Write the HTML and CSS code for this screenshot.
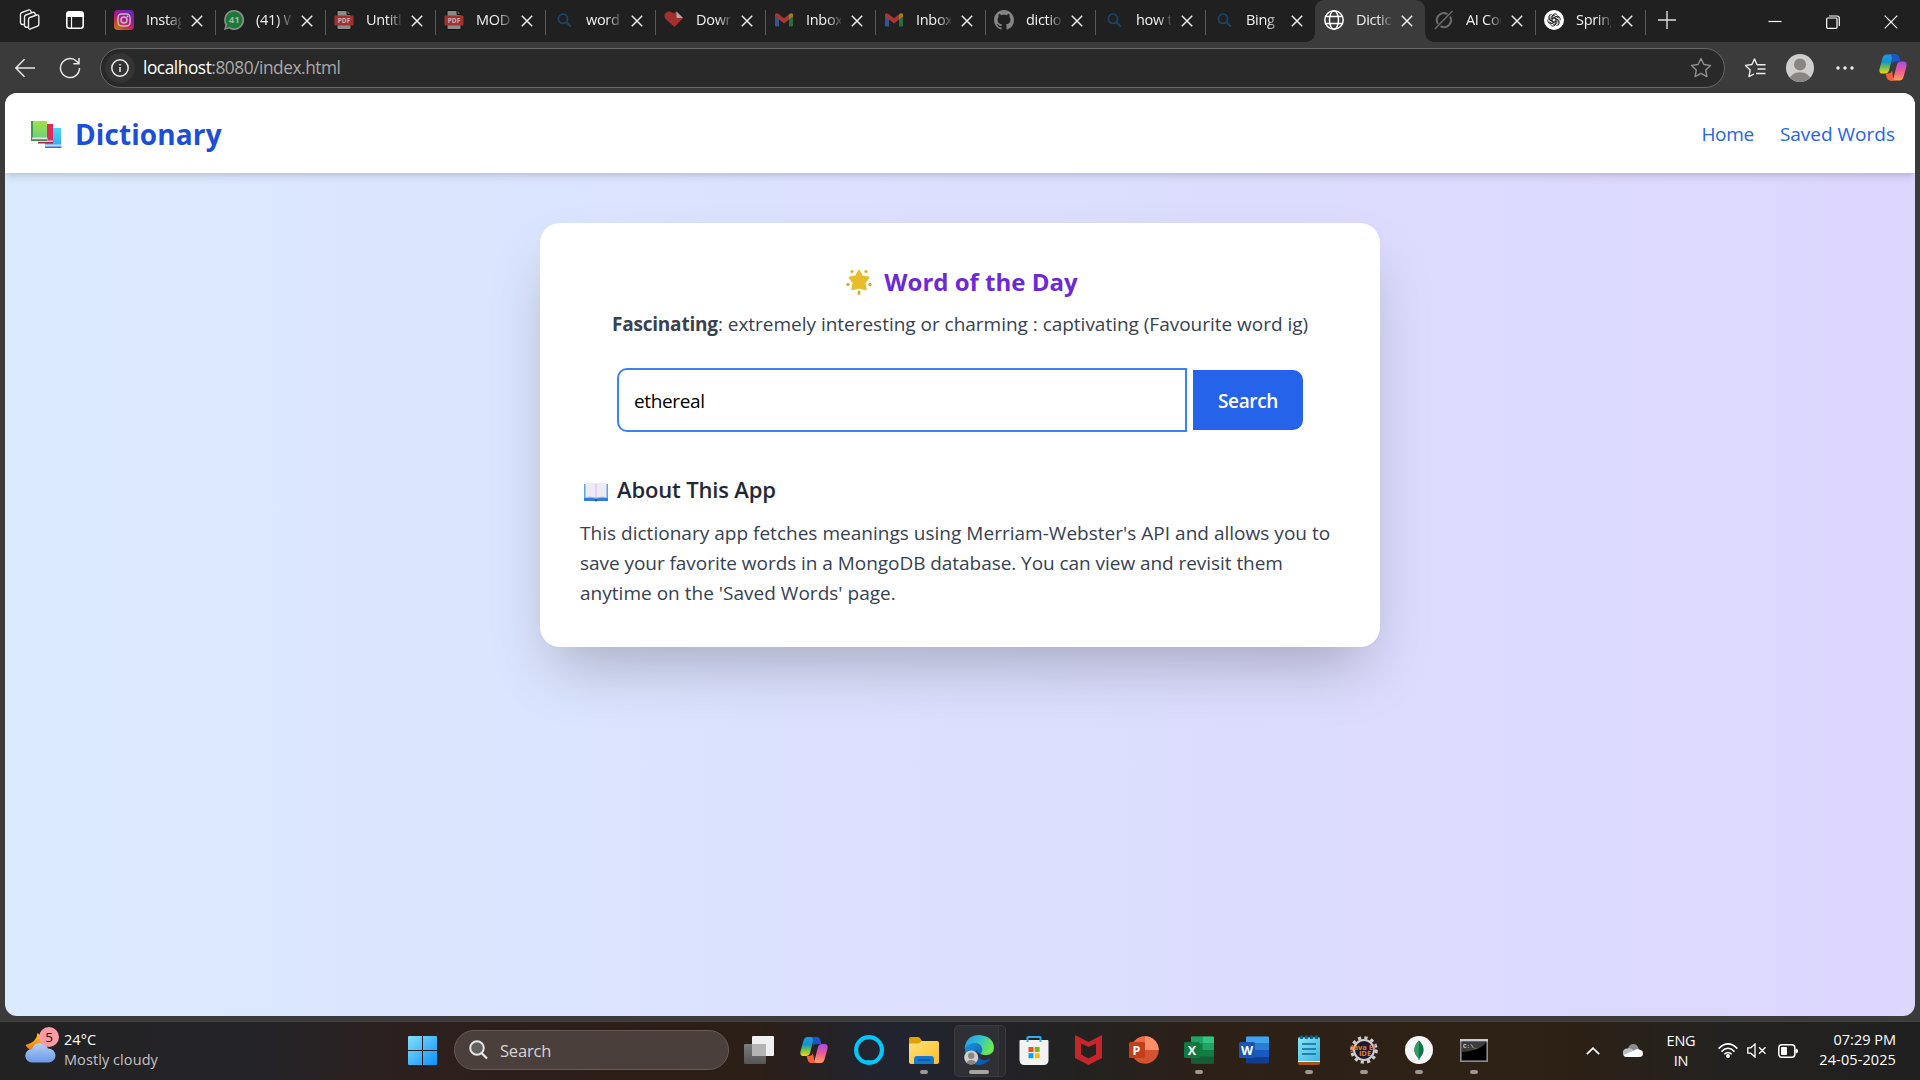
FILE: index.html
```html
<!DOCTYPE html>
<html lang="en">
<head>
<meta charset="utf-8">
<title>Dictionary</title>
<link rel="stylesheet" href="styles.css">
</head>
<body>
<svg class="defs" width="0" height="0" aria-hidden="true">
  <defs>
    <linearGradient id="gInsta" x1="0" y1="1" x2=".6" y2="0"><stop offset="0" stop-color="#c98a10"/><stop offset=".3" stop-color="#c4442a"/><stop offset=".6" stop-color="#b0188a"/><stop offset="1" stop-color="#6a28b0"/></linearGradient>
    <linearGradient id="gCpA" x1="0" y1="0" x2="0" y2="1"><stop offset="0" stop-color="#1b9be8"/><stop offset=".4" stop-color="#1496c8"/><stop offset=".7" stop-color="#7cc04a"/><stop offset="1" stop-color="#f4d512"/></linearGradient>
    <linearGradient id="gCpB" x1="0" y1="0" x2="0" y2="1"><stop offset="0" stop-color="#a64ee8"/><stop offset=".5" stop-color="#ee5a92"/><stop offset="1" stop-color="#ffa052"/></linearGradient>
    <linearGradient id="gWin" x1="0" y1="0" x2="29" y2="29" gradientUnits="userSpaceOnUse"><stop offset="0" stop-color="#84e0fc"/><stop offset="1" stop-color="#0a92fa"/></linearGradient>
    <linearGradient id="gFold" x1="0" y1="0" x2="1" y2="1"><stop offset="0" stop-color="#ffe07a"/><stop offset="1" stop-color="#fcbf28"/></linearGradient>
    <linearGradient id="gEdgeA" x1="0" y1="0" x2="1" y2=".4"><stop offset="0" stop-color="#2494e4"/><stop offset=".5" stop-color="#2fc0d4"/><stop offset="1" stop-color="#6be84e"/></linearGradient>
    <linearGradient id="gEdgeB" x1="0" y1="0" x2="1" y2="1"><stop offset="0" stop-color="#1a94e4"/><stop offset="1" stop-color="#0b4a9c"/></linearGradient>
    <linearGradient id="gCloud" x1="0" y1="0" x2="0" y2="1"><stop offset="0" stop-color="#b6d0f8"/><stop offset="1" stop-color="#6b98e6"/></linearGradient>
    <linearGradient id="gMoon" x1="0" y1="0" x2="0" y2="1"><stop offset="0" stop-color="#f8c830"/><stop offset="1" stop-color="#f07a10"/></linearGradient>
    <linearGradient id="gGreen" x1="0" y1="0" x2="0" y2="1"><stop offset="0" stop-color="#a2e048"/><stop offset="1" stop-color="#6fd07a"/></linearGradient>
    <linearGradient id="gBlue" x1="0" y1="0" x2="0" y2="1"><stop offset="0" stop-color="#4fd6f4"/><stop offset="1" stop-color="#2fa8f0"/></linearGradient>
    <linearGradient id="gNote" x1="0" y1="0" x2="1" y2="1"><stop offset="0" stop-color="#8ae4f8"/><stop offset="1" stop-color="#3fb4e0"/></linearGradient>
    <linearGradient id="gGlass" x1="0" y1="0" x2="0" y2="1"><stop offset="0" stop-color="#7c7c7c"/><stop offset="1" stop-color="#555"/></linearGradient>
    <symbol id="x" viewBox="0 0 12 12"><path d="M.8.8l10.400 10.400M11.200.8L.8 11.200" stroke="#eee" stroke-width="1.500" fill="none"/></symbol>
    <symbol id="pdf" viewBox="0 0 20 20"><path d="M3 .5h10l4 4V19.500H3z" fill="#8b8b8b" stroke="#111"/><path d="M13 .5v4h4" fill="#555" stroke="#111"/><rect x=".5" y="5.500" width="19" height="10" rx="1" fill="#a13131"/><text x="10" y="13.300" text-anchor="middle" class="pdf-text">PDF</text></symbol>
    <symbol id="bing" viewBox="0 0 20 20"><circle cx="9" cy="8.800" r="4.600" fill="none" stroke="#1b4468" stroke-width="1.800"/><path d="M12.500 12.300l4.300 4.300" stroke="#1b4468" stroke-width="2"/></symbol>
    <symbol id="gmail" viewBox="0 0 20 20"><path d="M1 4.500h4V16.500H2.200A1.200 1.200 0 0 1 1 15.300z" fill="#345595"/><path d="M15 4.500h4V15.300a1.200 1.200 0 0 1-1.200 1.200H15z" fill="#2c6b3c"/><path d="M1 4.800C1 3 3 2.800 4.200 3.800L10 8.200l5.800-4.400V9L10 13.500 1 6.500z" fill="#a5382e"/><path d="M15 4.500C17 2.300 19 3.200 19 4.800V6.500L15 9.600z" fill="#a67c10"/></symbol>
    <symbol id="copilot" viewBox="0 0 28 26"><path d="M7.500 0H17l-3.500 2.500L10 16q-1 3-4 3H3.500Q-.5 19 .6 14L3.500 3.500Q4.500 0 7.500 0z" fill="url(#gCpA)"/><path d="M11 0h6q2.500 0 3.300 3l1.100 4H16q-2 0-2.600 2L13 4q-.4-4-2-4z" fill="#1d55d0"/><path d="M20.500 26H11l3.500-2.500L18 10q1-3 4-3h2.500Q28.500 7 27.400 12L24.500 22.500Q23.500 26 20.500 26z" fill="url(#gCpB)"/><path d="M17 26h-6q-2.500 0-3.300-3l-1.100-4H9q3 0 4-3l1 6q.4 4 3 4z" fill="#f4603a"/></symbol>
  </defs>
</svg>

<header class="tabs">
  <div class="tab-tools">
    <svg width="22" height="22" viewBox="0 0 22 22" fill="none" stroke="#eee" stroke-width="1.400" stroke-linejoin="round"><path d="M9.500 10.500q0-1.500 1.300-2l7-2.500q2-.6 2 1.200v8q0 1.500-1.300 2l-7 2.700q-2 .6-2-1.200zM9.500 18q-4 .8-4-1.500V8q0-1.500 1.300-2L14 3.300q2-.5 2.300 2.500M5.500 15.300Q1.500 16 1.500 13.700V5.500q0-1.500 1.300-2L10 .9q1.800-.5 2.200 2.800"/></svg>
    <svg width="18" height="18" viewBox="0 0 18 18"><rect x=".8" y=".8" width="16.400" height="16.400" rx="2.500" fill="none" stroke="#fff" stroke-width="1.600"/><path d="M1 1h16v5H1z" fill="#fff"/><path d="M5.500 6v11" stroke="#fff" stroke-width="1.200"/></svg>
  </div>
  <div class="tab"><svg class="fav" viewBox="0 0 20 20"><rect width="20" height="20" rx="4" fill="url(#gInsta)"/><rect x="4" y="4" width="12" height="12" rx="3.500" fill="none" stroke="#cdb6c8" stroke-width="1.500"/><circle cx="10" cy="10" r="3" fill="none" stroke="#cdb6c8" stroke-width="1.500"/><circle cx="13.500" cy="6.400" r=".9" fill="#cdb6c8"/></svg><span class="name">Instagram</span><svg class="close"><use href="#x"/></svg></div>
  <div class="tab"><svg class="fav" viewBox="0 0 20 20"><path d="M10 0a10 10 0 1 1-5 18.600L0 20l1.400-5A10 10 0 0 1 10 0z" fill="#8c908c"/><path d="M10 1.600a8.400 8.400 0 1 1-4.500 15.500L2.200 18l1-3.200A8.400 8.400 0 0 1 10 1.600z" fill="#1b7a3a"/><text x="10.200" y="13.400" text-anchor="middle" class="wa-text">41</text></svg><span class="name">(41) WhatsApp</span><svg class="close"><use href="#x"/></svg></div>
  <div class="tab"><svg class="fav"><use href="#pdf"/></svg><span class="name">Untitled</span><svg class="close"><use href="#x"/></svg></div>
  <div class="tab"><svg class="fav"><use href="#pdf"/></svg><span class="name">MODULE</span><svg class="close"><use href="#x"/></svg></div>
  <div class="tab"><svg class="fav"><use href="#bing"/></svg><span class="name">word</span><svg class="close"><use href="#x"/></svg></div>
  <div class="tab"><svg class="fav" viewBox="0 0 20 20"><path d="M10.500 17L1.500 9Q-.8 5.500 1.500 3 4.500.5 8 2.200L10 3.500 12 1.200 19 8z" fill="#a33030"/><path d="M12.500 1.500L19 8h-5.500q-1 0-1-1z" fill="#b4a8a8"/></svg><span class="name">Download</span><svg class="close"><use href="#x"/></svg></div>
  <div class="tab"><svg class="fav"><use href="#gmail"/></svg><span class="name">Inbox</span><svg class="close"><use href="#x"/></svg></div>
  <div class="tab"><svg class="fav"><use href="#gmail"/></svg><span class="name">Inbox</span><svg class="close"><use href="#x"/></svg></div>
  <div class="tab"><svg class="fav" viewBox="0 0 16 16"><path fill="#858585" d="M8 0C3.580 0 0 3.580 0 8c0 3.540 2.290 6.530 5.470 7.590.4.070.55-.17.55-.38 0-.19-.01-.82-.01-1.490-2.010.37-2.530-.49-2.690-.94-.09-.23-.48-.94-.82-1.130-.28-.15-.68-.52-.01-.53.63-.01 1.080.58 1.230.82.720 1.210 1.870.87 2.330.66.070-.52.280-.87.510-1.070-1.780-.2-3.640-.89-3.640-3.950 0-.87.310-1.590.820-2.150-.08-.2-.36-1.020.08-2.120 0 0 .67-.21 2.200.82.640-.18 1.320-.27 2-.27s1.360.09 2 .27c1.530-1.040 2.200-.82 2.200-.82.440 1.100.160 1.920.080 2.120.510.560.820 1.270.820 2.150 0 3.070-1.870 3.750-3.650 3.950.290.250.540.730.540 1.480 0 1.070-.01 1.930-.01 2.200 0 .21.150.46.550.38A8.010 8.010 0 0 0 16 8c0-4.420-3.580-8-8-8z"/></svg><span class="name">dictionary</span><svg class="close"><use href="#x"/></svg></div>
  <div class="tab"><svg class="fav"><use href="#bing"/></svg><span class="name">how to</span><svg class="close"><use href="#x"/></svg></div>
  <div class="tab"><svg class="fav"><use href="#bing"/></svg><span class="name">Bing</span><svg class="close"><use href="#x"/></svg></div>
  <div class="tab active"><svg class="fav" viewBox="0 0 20 20" fill="none" stroke="#fff" stroke-width="1.500"><circle cx="10" cy="10" r="9.200"/><ellipse cx="10" cy="10" rx="4.500" ry="9.200"/><path d="M1.500 6.500h17M1.500 13.500h17"/></svg><span class="name">Dictionary</span><svg class="close"><use href="#x"/></svg></div>
  <div class="tab plain"><svg class="fav" viewBox="0 0 20 20" fill="none" stroke="#6c6c6c" stroke-width="2"><path d="M13.500 4.200A7 7 0 0 0 4 14M6.500 16.200A7 7 0 0 0 16 6.500"/><path d="M.8 19L18.500 1" stroke-width="1.400"/></svg><span class="name">AI Code</span><svg class="close"><use href="#x"/></svg></div>
  <div class="tab"><svg class="fav" viewBox="0 0 20 20"><circle cx="10" cy="10" r="10" fill="#fff"/><g fill="none" stroke="#222" stroke-width=".9"><path id="pet" d="M8 11V6.500a3 3 0 0 1 5.500-1.300M8 8.800l4-2.300 3 1.700"/><use href="#pet" transform="rotate(60 10 10)"/><use href="#pet" transform="rotate(120 10 10)"/><use href="#pet" transform="rotate(180 10 10)"/><use href="#pet" transform="rotate(240 10 10)"/><use href="#pet" transform="rotate(300 10 10)"/></g></svg><span class="name">Spring</span><svg class="close"><use href="#x"/></svg></div>
  <div class="new-tab"><svg width="18" height="18" viewBox="0 0 18 18"><path d="M9 0v18M0 9h18" stroke="#ddd" stroke-width="1.400"/></svg></div>
  <div class="win-btns">
    <svg width="14" height="14" viewBox="0 0 14 14"><path d="M.5 6.500h13" stroke="#fff" stroke-width="1.200"/></svg>
    <svg width="14" height="14" viewBox="0 0 14 14" fill="none" stroke="#fff" stroke-width="1.200"><rect x=".7" y="3" width="10.300" height="10.300" rx="1"/><path d="M3 1h8q2.300 0 2.300 2.300V11"/></svg>
    <svg width="14" height="14" viewBox="0 0 14 14"><path d="M.7.7l12.600 12.600M13.300.7L.7 13.300" stroke="#fff" stroke-width="1.200"/></svg>
  </div>
</header>

<div class="toolbar">
  <svg class="back" width="20" height="20" viewBox="0 0 20 20" fill="none" stroke="#e6e6e6" stroke-width="1.500"><path d="M20 10H1M9.500 1.300L.9 10l8.600 8.700"/></svg>
  <svg class="reload" width="22" height="22" viewBox="0 0 22 22" fill="none" stroke="#e6e6e6" stroke-width="1.500"><path d="M20.500 11a9.500 9.500 0 1 1-2.900-6.800L20 6.500M20 1v5.700h-5.700"/></svg>
  <div class="address">
    <span class="info"><svg width="18" height="18" viewBox="0 0 18 18" fill="none" stroke="#eee" stroke-width="1.500"><circle cx="9" cy="9" r="8.200"/><path d="M9 8v5M9 5v1.600"/></svg></span>
    <span class="url">localhost<span class="dim">:8080/index.html</span></span>
    <svg class="star" width="22" height="22" viewBox="0 0 22 22"><path d="M11 1.500l2.900 6 6.600.9-4.800 4.600 1.200 6.600-5.900-3.200-5.900 3.200 1.200-6.600L1.500 8.400l6.600-.9z" fill="none" stroke="#8f8f8f" stroke-width="1.400" stroke-linejoin="round"/></svg>
  </div>
  <svg class="favs" width="22" height="22" viewBox="0 0 22 22" fill="none" stroke="#eee" stroke-width="1.400" stroke-linejoin="round"><path d="M13 7.700L10.500 2 7.900 7.500l-6.400.9 4.700 4.600L5 19.600l5-2.600M13 7.700h8.500M13.500 12h8M12 16.500h9.500"/></svg>
  <svg class="avatar" width="28" height="28" viewBox="0 0 28 28"><clipPath id="av"><circle cx="14" cy="14" r="14"/></clipPath><g clip-path="url(#av)"><path d="M0 0h28v28H0z" fill="#d0ceca"/><circle cx="14" cy="10.500" r="6" fill="#8a8683"/><ellipse cx="14" cy="26" rx="10.500" ry="7.800" fill="#8a8683"/></g></svg>
  <svg class="more" width="18" height="4" viewBox="0 0 18 4" fill="#eee"><circle cx="2" cy="2" r="1.700"/><circle cx="9" cy="2" r="1.700"/><circle cx="16" cy="2" r="1.700"/></svg>
  <svg class="cp" width="28" height="27"><use href="#copilot"/></svg>
</div>

<div class="frame">
  <div class="page">
    <nav class="navbar">
      <svg class="books" width="31" height="28" viewBox="0 0 31 28"><path d="M14 8h16v19H14z" fill="url(#gBlue)"/><path d="M14 24.500h16.500V27H14z" fill="#d0d4f4"/><path d="M14 26.500h16.500V28H14z" fill="#2878c8"/><path d="M7 4h15v17H7z" fill="#e0285c"/><path d="M7 20.500h15v2H7z" fill="#e8d0e0"/><path d="M7 22h15v1.400H7z" fill="#a82050"/><path d="M1 1h15v17H1z" fill="url(#gGreen)"/><path d="M0 1h2v19H0z" fill="#3a9c50"/><path d="M1 17.500h15.500V20H1z" fill="#e0e4ec"/><path d="M0 19.300h16V21H0z" fill="#4c8448"/></svg>
      <span class="brand">Dictionary</span>
      <a class="link home">Home</a>
      <a class="link">Saved Words</a>
    </nav>
    <main class="card">
      <h2 class="wotd">
        <svg width="26" height="26" viewBox="0 0 26 26"><path d="M13 2l3 5.800 6.200.8-4 5.200 1.300 6.200-6.500-1.700-6.500 1.700 1.300-6.200L3.800 8.600l6.200-.8z" fill="#e8bd2c" stroke="#e8bd2c" stroke-width="2.400" stroke-linejoin="round"/><g fill="#e0aa28"><circle cx="6" cy="2.500" r="1.600"/><circle cx="20" cy="2.500" r="1.600"/><circle cx="2" cy="15.500" r="1.700"/><circle cx="24" cy="15.500" r="1.700"/><ellipse cx="13" cy="23.700" rx="1.500" ry="2.200"/></g></svg>
        <span>Word of the Day</span>
      </h2>
      <p class="meaning"><b>Fascinating</b>: extremely interesting or charming : captivating (Favourite word ig)</p>
      <form class="search">
        <div class="field">ethereal</div>
        <div class="button">Search</div>
      </form>
      <h3 class="about">
        <svg width="24" height="20" viewBox="0 0 24 20"><path d="M0 2h24v17H0z" fill="#5aa8e8"/><path d="M0 16h24v3H0z" fill="#2d7ed8"/><path d="M1.500 1q6-1 10.500.5V16q-5-1.500-10.500-.5zM22.500 1q-6-1-10.500.5V16q5-1.500 10.500-.5z" fill="#efeaf6"/><path d="M12 1.500V16" stroke="#cdc4e0"/><path d="M1.500 15.500q5.500-1 10.500.7 5-1.700 10.500-.7" stroke="#b8b0dc" fill="none"/><circle cx="12" cy="18.300" r="1.200" fill="#1550a0"/></svg>
        <span>About This App</span>
      </h3>
      <p class="desc">This dictionary app fetches meanings using Merriam-Webster's API and allows you to<br><span class="tight">save your favorite words in a MongoDB database. You can view and revisit them</span><br>anytime on the 'Saved Words' page.</p>
    </main>
  </div>
</div>

<footer class="taskbar">
  <div class="weather">
    <div class="w-icon">
      <svg width="32" height="38" viewBox="0 0 32 38"><path d="M12.500 6q-.5 9-12 12 2.500 5 8 5 9-1 8-11-.5-4-4-6z" fill="url(#gMoon)"/><path d="M7 35.500a6.500 6.500 0 0 1 0-13.500q2-6 8-6t8 5.500a7 7 0 0 1 1 14z" fill="url(#gCloud)"/></svg>
      <span class="badge">5</span>
    </div>
    <div class="w-text"><span class="temp">24°C</span><span>Mostly cloudy</span></div>
  </div>
  <div class="apps">
    <div class="start"><svg width="29" height="29" viewBox="0 0 29 29" fill="url(#gWin)"><path d="M0 1q0-1 1-1h13v14H0zM15 0h13q1 0 1 1v13H15zM0 15h14v14H1q-1 0-1-1zM15 15h14v13q0 1-1 1H15z"/></svg></div>
    <div class="tb-search"><svg width="19" height="20" viewBox="0 0 19 20"><circle cx="8" cy="8" r="6.800" fill="#63605f" stroke="#e6e4e4" stroke-width="2"/><path d="M12.800 13.200l5.200 5.300" stroke="#e6e4e4" stroke-width="2.300"/></svg><span>Search</span></div>
    <div class="app"><svg width="30" height="28" viewBox="0 0 30 28"><rect x="8" width="22" height="20" rx="1" fill="#f0f0f0"/><rect y="8" width="22" height="20" rx="1" fill="url(#gGlass)"/><path d="M8 8h14v12H8z" fill="#b4b4b4"/></svg></div>
    <div class="app"><svg width="28" height="26"><use href="#copilot"/></svg></div>
    <div class="app"><svg width="30" height="30" viewBox="0 0 30 30"><path fill-rule="evenodd" d="M15 0a15 15 0 1 1-1.500 30L12.600 26.200A11.500 11.500 0 1 1 17 26.300L13.500 30H15A15 15 0 1 1 15 0z" fill="none"/><circle cx="15" cy="15" r="12.900" fill="none" stroke="#00c8fa" stroke-width="4.200"/><path d="M12.500 25v2.500L14 30l5-4.500z" fill="#00c8fa"/></svg></div>
    <div class="app run"><svg width="30" height="27" viewBox="0 0 30 27"><path d="M0 2q0-2 2-2h7q1 0 2 1l2 3v5H0z" fill="#e0a008"/><path d="M0 6.500h10l2.500-2.500H28q2 0 2 2v19q0 2-2 2H2q-2 0-2-2z" fill="url(#gFold)"/><path d="M5 27v-5q0-3 3-3h14q3 0 3 3v5z" fill="#1478d0"/><path d="M9 23h12" stroke="#0a4a90" stroke-width="1.200"/></svg></div>
    <div class="app current"><svg width="30" height="30" viewBox="0 0 30 30"><path d="M1 13Q3 5 12 8q9 3 6 12-5-2-6-5-2 6 4 9 5 3 11-1-4 7-12 7Q1 29 1 13z" fill="url(#gEdgeB)"/><path d="M.5 14Q2 0 15 0q14 1 15 12 0 8-8 8-5 0-5-2 2-2 1-5-2-5-8-5-7 1-9.500 6z" fill="url(#gEdgeA)"/><clipPath id="ep"><circle cx="7.200" cy="22.500" r="7"/></clipPath><g clip-path="url(#ep)"><path d="M0 15h15v15H0z" fill="#d0ceca"/><circle cx="7.200" cy="20.800" r="3.200" fill="#8a8683"/><ellipse cx="7.200" cy="28.800" rx="5" ry="3.900" fill="#8a8683"/></g></svg></div>
    <div class="app"><svg width="30" height="30" viewBox="0 0 30 30"><path d="M8.500 6V2.500Q8.500 2 9 2h12q.5 0 .5.500V6" fill="none" stroke="#28b0ec" stroke-width="2"/><path d="M.5 6Q.5 5 1.500 5h27q1 0 1 1v19q0 5-5 5h-19q-5 0-5-5z" fill="#f3f3f3"/><path d="M9.500 12h5v5h-5z" fill="#f25022"/><path d="M15.700 12h5v5h-5z" fill="#7fba00"/><path d="M9.500 18.200h5v5h-5z" fill="#00a4ef"/><path d="M15.700 18.200h5v5h-5z" fill="#ffb900"/><path d="M8.500 5v2M21.500 5v2" stroke="#28b0ec" stroke-width="2"/></svg></div>
    <div class="app"><svg width="27" height="30" viewBox="0 0 27 30"><path fill-rule="evenodd" d="M0 0l13.500 7L27 0v23l-13.500 7L0 23zM6 8.500v11l7.500 4 7.500-4v-11L13.500 12z" fill="#c4262c"/></svg></div>
    <div class="app"><svg width="30" height="28" viewBox="0 0 30 28"><circle cx="16" cy="14" r="13.700" fill="#d35230"/><path d="M16 .3A13.700 13.700 0 0 0 2.300 14H16z" fill="#ed6c47"/><path d="M16 .3A13.700 13.700 0 0 1 29.700 14H16z" fill="#ff8f6b"/><rect y="6" width="16" height="16" rx="1.500" fill="#c43e1c"/><text x="7.500" y="18.500" text-anchor="middle" class="ms">P</text></svg></div>
    <div class="app run"><svg width="30" height="28" viewBox="0 0 30 28"><rect x="7" y=".5" width="23" height="27" rx="1.500" fill="#107c41"/><path d="M7 .500h11.500v7H7z" fill="#21a366"/><path d="M18.500.5H29q1 0 1 1v6H18.500z" fill="#33c481"/><path d="M18.500 7.500H30v6.500H18.500z" fill="#21a366"/><path d="M7 20.500h23v6q0 1-1 1H8q-1 0-1-1z" fill="#185c37"/><rect y="6" width="16" height="16" rx="1.500" fill="#0f7a40"/><text x="8" y="18.500" text-anchor="middle" class="ms">X</text></svg></div>
    <div class="app"><svg width="30" height="28" viewBox="0 0 30 28"><rect x="7" y=".5" width="23" height="27" rx="1.500" fill="#103f91"/><path d="M7 7h23v14H7z" fill="#185abd"/><path d="M7 7h23v7H7z" fill="#2b7cd3"/><path d="M8 .500h21q1 0 1 1V7H7V1.500q0-1 1-1z" fill="#41a5ee"/><rect y="6" width="16" height="16" rx="1.500" fill="#1a55b4"/><text x="8" y="18.500" text-anchor="middle" class="ms">W</text></svg></div>
    <div class="app run"><svg width="22" height="30" viewBox="0 0 22 30"><path d="M0 4q0-2 2-2h18q2 0 2 2v24q0 2-2 2H2q-2 0-2-2z" fill="#a8560c"/><path d="M0 22h22v5H0z" fill="#f0f0ec"/><path d="M0 4q0-2 2-2h18q2 0 2 2v22H0z" fill="url(#gNote)"/><path d="M4 9h14M4 14h14M4 19h14" stroke="#0c6c94" stroke-width="1.600"/><g fill="#0c6084"><circle cx="3.500" cy="2.200" r="1.900"/><circle cx="8.500" cy="2.200" r="1.900"/><circle cx="13.500" cy="2.200" r="1.900"/><circle cx="18.500" cy="2.200" r="1.900"/></g></svg></div>
    <div class="app run"><svg width="30" height="28" viewBox="0 0 30 28"><circle cx="15" cy="14" r="12.300" fill="none" stroke="#cfcfcf" stroke-width="3" stroke-dasharray="3.220 3.220"/><circle cx="15" cy="14" r="10" fill="#1e1a2e" stroke="#cfcfcf" stroke-width="2"/><text x="15" y="13.500" text-anchor="middle" class="java">Java EE</text><text x="16" y="20" text-anchor="middle" class="java">IDE</text></svg></div>
    <div class="app run"><svg width="28" height="28" viewBox="0 0 28 28"><circle cx="14" cy="14" r="14" fill="#f6f6f6"/><path d="M14 4.500q9 9 .5 18V24h-1v-1.500Q5 13.500 14 4.500z" fill="#10744a"/><path d="M14 4.500q-9 9-.3 18z" fill="#2fa065"/></svg></div>
    <div class="app run"><svg width="28" height="23" viewBox="0 0 28 23"><rect x=".8" y=".8" width="26.400" height="21.400" fill="#000" stroke="#8a8d96" stroke-width="1.600"/><path d="M2 3h24q-4 8-24 10z" fill="#3c3c3c"/><path d="M0 0h28v2.500H0z" fill="#c8cad0"/><text x="3" y="9" class="cmd">C:\_</text></svg></div>
  </div>
  <div class="tray">
    <svg class="chev" width="14" height="8" viewBox="0 0 14 8"><path d="M.8 7.200L7 1.200l6.200 6" fill="none" stroke="#fff" stroke-width="1.800"/></svg>
    <svg class="drive" width="20" height="13" viewBox="0 0 20 13"><path d="M5 9V5Q6 0 10.500 0 14 0 15.500 4l1 4z" fill="#8c8c8c"/><path d="M4 13a4 4 0 0 1 0-8.500q3-1 5.500 1L14 9z" fill="#bdbdbd"/><path d="M3 13q-2.500-.5-2.500-2L12 6q2-1.500 4-.5 4 .5 4 4 0 3.500-4 3.500z" fill="#fff"/></svg>
    <div class="lang"><span>ENG</span><span>IN</span></div>
    <svg class="wifi" width="20" height="15" viewBox="0 0 20 15" fill="none" stroke="#fff" stroke-width="1.500"><path d="M.6 5.600q9.400-9.400 18.800 0M3.500 8.600q6.500-6.500 13 0M6.300 11.300q3.700-3.700 7.400 0"/><circle cx="10" cy="13" r="1.200" fill="#fff"/></svg>
    <svg class="vol" width="20" height="15" viewBox="0 0 20 15" fill="none" stroke="#fff" stroke-width="1.300"><path d="M.8 4.800h3L8 1v13l-4.200-3.800h-3zM12 4.300l6.500 6.500M18.500 4.300L12 10.800"/></svg>
    <svg class="bat" width="20" height="14" viewBox="0 0 20 14"><rect x=".8" y=".8" width="16" height="12.400" rx="3" fill="none" stroke="#fff" stroke-width="1.500"/><rect x="3" y="3" width="6" height="8" rx="1" fill="#fff"/><path d="M17.500 4.500q2.500 0 2.500 2.500t-2.500 2.500z" fill="#fff"/></svg>
    <div class="clock"><span class="time">07:29 PM</span><span class="date">24-05-2025</span></div>
  </div>
</footer>
</body>
</html>
```
FILE: styles.css
```css
* { box-sizing: border-box; }
body {
  margin: 0;
  width: 1920px;
  height: 1080px;
  overflow: hidden;
  display: flex;
  flex-direction: column;
  background: #3b3b3b;
  font-family: "Open Sans", "Noto Sans", sans-serif;
}
svg { display: block; flex: none; }
.defs { position: absolute; }
h2, h3, p { margin: 0; }

/* tab strip */
.tabs {
  height: 42px;
  flex: none;
  display: flex;
  background: #202020;
  color: #f2f2f2;
}
.tab-tools {
  width: 105px;
  padding: 0 21px 2px 19px;
  display: flex;
  align-items: center;
  justify-content: space-between;
}
.tab {
  width: 110px;
  height: 42px;
  padding: 0 0 2px 9px;
  display: flex;
  align-items: center;
  background: linear-gradient(#5a5a5a, #5a5a5a) 0 10px / 1px 25px no-repeat;
}
.tab.active {
  position: relative;
  background: #3b3b3b;
  border-radius: 9px 9px 0 0;
}
.tab.active::before,
.tab.active::after {
  content: "";
  position: absolute;
  bottom: 0;
  width: 9px;
  height: 9px;
}
.tab.active::before { left: -9px; background: radial-gradient(circle at 0 0, transparent 8.5px, #3b3b3b 9px); }
.tab.active::after { right: -9px; background: radial-gradient(circle at 100% 0, transparent 8.5px, #3b3b3b 9px); }
.tab.plain { background: none; }
.fav { width: 20px; height: 20px; }
.name {
  width: 35px;
  margin-left: 12px;
  overflow: hidden;
  white-space: nowrap;
  font-size: 14.5px;
  line-height: 24px;
  letter-spacing: -.3px;
  -webkit-mask-image: linear-gradient(90deg, #000 60%, rgba(0, 0, 0, .15));
  mask-image: linear-gradient(90deg, #000 60%, rgba(0, 0, 0, .15));
}
.close { width: 12px; height: 12px; margin: 1px 0 0 10px; }
.new-tab {
  width: 44px;
  padding: 0 0 3px 13px;
  display: flex;
  align-items: center;
  background: linear-gradient(#5a5a5a, #5a5a5a) 0 10px / 1px 25px no-repeat;
}
.win-btns {
  flex: 1;
  padding: 1px 22px 0 0;
  display: flex;
  align-items: center;
  justify-content: flex-end;
  gap: 44px;
}
.pdf-text { font: 700 6.5px "Open Sans", sans-serif; fill: #c9b5b5; }
.wa-text { font: 700 9.5px "Open Sans", sans-serif; fill: #9fb5a4; }

/* toolbar */
.toolbar {
  height: 51px;
  flex: none;
  display: flex;
  align-items: center;
  padding: 0 13px 0 15px;
}
.reload { margin-left: 24px; }
.address {
  width: 1625px;
  height: 40px;
  margin-left: 19px;
  padding: 0 12px 0 4px;
  display: flex;
  align-items: center;
  border: 1px solid #686868;
  border-radius: 20px;
  background: #292929;
}
.info {
  width: 30px;
  height: 30px;
  border-radius: 50%;
  background: #343434;
  display: flex;
  align-items: center;
  justify-content: center;
}
.url {
  flex: 1;
  margin-left: 8px;
  color: #fff;
  font-size: 17.3px;
  line-height: 24px;
  letter-spacing: -.45px;
}
.dim { color: #a9a9a9; }
.favs { margin-left: 19px; }
.avatar { margin-left: 20px; }
.more { margin-left: 22px; }
.cp { margin-left: 25px; }

/* page */
.frame { height: 928px; flex: none; padding: 0 5px 5px; }
.page {
  height: 923px;
  border-radius: 12px;
  overflow: hidden;
  background: linear-gradient(90deg, #dbeafe, #ddd6fe);
  display: flex;
  flex-direction: column;
  align-items: center;
}
.navbar {
  width: 100%;
  height: 80px;
  padding: 2px 20px 0 26px;
  display: flex;
  align-items: center;
  background: #fff;
  box-shadow: 0 5px 8px -1px rgba(0, 0, 0, .1), 0 2.5px 5px -2px rgba(0, 0, 0, .1);
}
.brand {
  flex: 1;
  margin-left: 13px;
  color: #1d4ed8;
  font-size: 28px;
  font-weight: 700;
  line-height: 40px;
  letter-spacing: .1px;
}
.link { color: #2563eb; font-size: 19px; line-height: 30px; }
.home { margin-right: 26px; letter-spacing: -.3px; }
.card {
  width: 840px;
  height: 424px;
  margin-top: 50px;
  padding: 41px 40px 40px;
  border-radius: 20px;
  background: #fff;
  box-shadow: 0 31px 62px -15px rgba(0, 0, 0, .25);
}
.wotd {
  height: 36px;
  padding-left: 4px;
  display: flex;
  justify-content: center;
  align-items: center;
  gap: 12px;
  color: #6d28d9;
  font-size: 24px;
  line-height: 36px;
  font-weight: 700;
}
.meaning {
  margin-top: 9px;
  text-align: center;
  color: #374151;
  font-size: 19px;
  line-height: 30px;
  letter-spacing: -.02px;
}
.meaning b { letter-spacing: -.2px; }
.search {
  height: 64px;
  margin: 29px 37px 0;
  display: flex;
  align-items: center;
  justify-content: space-between;
}
.field {
  width: 570px;
  height: 64px;
  padding-left: 15px;
  border: 2px solid #3b82f6;
  border-radius: 10px 0 0 10px;
  font-size: 19px;
  line-height: 62px;
  letter-spacing: -.35px;
  color: #000;
}
.button {
  width: 110px;
  height: 60px;
  border-radius: 0 10px 10px 0;
  background: #2563eb;
  color: #fff;
  font-size: 19px;
  font-weight: 600;
  line-height: 62px;
  letter-spacing: -.35px;
  text-align: center;
}
.about {
  margin: 39px 0 0 4px;
  display: flex;
  align-items: center;
  gap: 9px;
  color: #1f2937;
  font-size: 22px;
  font-weight: 600;
  line-height: 36px;
  letter-spacing: -.15px;
}
.about svg { margin-top: 5px; }
.desc {
  margin-top: 11px;
  color: #374151;
  font-size: 19px;
  line-height: 30px;
  letter-spacing: .02px;
  white-space: nowrap;
}
.tight { letter-spacing: -.05px; }

/* taskbar */
.taskbar {
  flex: 1;
  display: flex;
  justify-content: space-between;
  border-top: 1px solid #454340;
  background: linear-gradient(90deg, #222223 0, #242328 260px, #2c201e 400px, #2d1e18 620px, #2b1f17 760px, #212430 880px, #222228 1000px, #242220 1090px, #2c2018 1200px, #2e2115 1450px, #2d2015 1560px, #242220 1720px, #202020 100%);
  color: #fff;
  font-size: 14.5px;
}
.weather { width: 381px; padding-left: 25px; display: flex; }
.w-icon { position: relative; width: 39px; padding-top: 5px; }
.badge {
  position: absolute;
  left: 14px;
  top: 5px;
  width: 20px;
  height: 20px;
  border-radius: 50%;
  background: #ff99a4;
  color: #111;
  font-size: 13.5px;
  line-height: 20px;
  text-align: center;
}
.w-text, .clock, .lang { display: flex; flex-direction: column; line-height: 20px; }
.w-text { padding-top: 8px; color: #c4c4c4; letter-spacing: .08px; }
.temp { color: #fff; }
.apps { flex: 1; display: flex; }
.start { width: 73px; padding: 14px 0 0 27px; }
.tb-search {
  width: 275px;
  height: 40px;
  margin: 8px 2px 0 0;
  padding-left: 14px;
  display: flex;
  align-items: center;
  gap: 12px;
  border: 1px solid #655a56;
  border-radius: 20px;
  background: #4a3f3b;
  color: #d8d4d2;
  font-size: 16.5px;
  letter-spacing: -.2px;
}
.app {
  position: relative;
  width: 55px;
  height: 56px;
  flex: none;
  display: flex;
  align-items: center;
  justify-content: center;
}
.app svg { position: relative; }
.run::after {
  content: "";
  position: absolute;
  left: 24px;
  bottom: 4px;
  width: 8px;
  height: 4px;
  border-radius: 2px;
  background: #9c9792;
}
.current::before {
  content: "";
  position: absolute;
  left: 3px;
  top: 3px;
  width: 50px;
  height: 50px;
  border: 1px solid #3c3c40;
  border-radius: 5px;
  background: linear-gradient(90deg, #2f3036 43px, #424248 43px, #2a2a2e 44px);
}
.current::after {
  content: "";
  position: absolute;
  left: 18px;
  bottom: 4px;
  width: 20px;
  height: 4px;
  border-radius: 2px;
  background: #a8a6a0;
}
.ms { font: 700 12.5px "Open Sans", sans-serif; fill: #fff; }
.java { font: 700 7.5px "Open Sans", sans-serif; fill: #f07c1c; }
.cmd { font: 700 6px "Liberation Mono", monospace; fill: #ccc; }
.tray { width: 334px; padding-bottom: 1px; display: flex; align-items: center; }
.drive { margin-left: 23px; }
.lang { width: 30px; margin-left: 23px; text-align: center; letter-spacing: -.2px; }
.wifi { margin-left: 22px; }
.vol { margin-left: 9px; }
.bat { margin-left: 11px; }
.clock { width: 98px; padding-bottom: 1px; text-align: right; }
.date { letter-spacing: .1px; }
```
